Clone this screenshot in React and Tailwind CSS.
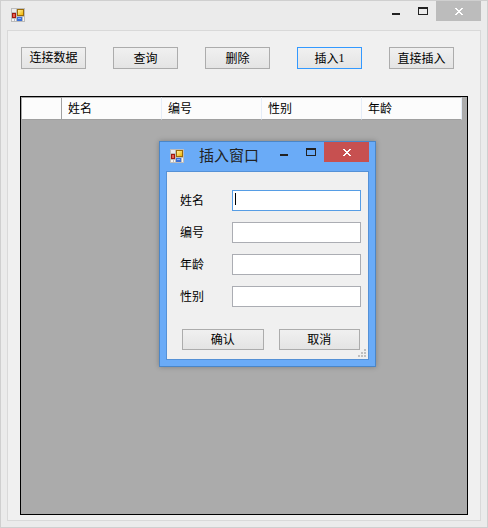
import React from "react";

function FormIcon() {
  return (
    <svg width="14" height="14" viewBox="0 0 14 14" shapeRendering="crispEdges" aria-hidden="true" className="block">
      <defs>
        <linearGradient id="gold" x1="0" y1="0" x2="1" y2="1">
          <stop offset="0" stopColor="#fff0a0" />
          <stop offset="1" stopColor="#f0b400" />
        </linearGradient>
      </defs>
      <rect width="14" height="14" fill="#bcbcbc" />
      <rect x="1" y="1" width="4" height="3" fill="#ececec" />
      <rect x="1" y="11" width="2" height="2" fill="#f4f4f4" />
      <rect x="4" y="11" width="1" height="2" fill="#f4f4f4" />
      <rect x="12" y="9" width="1" height="4" fill="#f4f4f4" />
      <rect x="6" y="1" width="7" height="7" fill="#9a6a08" />
      <rect x="7" y="2" width="5" height="5" fill="url(#gold)" />
      <rect x="1" y="5" width="4" height="5" fill="#a01810" />
      <rect x="2" y="6" width="2" height="3" fill="#e86050" />
      <rect x="6" y="9" width="5" height="4" fill="#3a6fd8" />
      <rect x="7" y="10" width="3" height="1" fill="#8ab4f8" />
    </svg>
  );
}

function CaptionButtons({ closeClass }) {
  return (
    <div className="ml-auto flex h-5 self-start">
      <button type="button" aria-label="最小化" className="flex w-[26px] justify-center pt-3">
        <svg width="8" height="2" viewBox="0 0 8 2" shapeRendering="crispEdges">
          <rect width="8" height="2" fill="#222" />
        </svg>
      </button>
      <button type="button" aria-label="最大化" className="flex w-[27px] justify-center pt-1.5">
        <svg width="10" height="8" viewBox="0 0 10 8" shapeRendering="crispEdges">
          <path d="M0 0h10v8H0zM1 2v5h8V2z" fill="#222" fillRule="evenodd" />
        </svg>
      </button>
      <button type="button" aria-label="关闭" className={`flex w-[45px] justify-center pt-[7px] ${closeClass}`}>
        <svg width="8" height="7" viewBox="0 0 8 7" shapeRendering="crispEdges">
          <path
            d="M0 0h2v1h1v1h2V1h1V0h2v1H7v1H6v1H5v1h1v1h1v1h1v1H6V6H5V5H3v1H2v1H0V6h1V5h1V4h1V3H2V2H1V1H0z"
            fill="#fff"
          />
        </svg>
      </button>
    </div>
  );
}

function Button({ className, children }) {
  return (
    <button
      type="button"
      className={`flex items-center justify-center border bg-linear-to-b from-[#f0f0f0] to-[#e4e4e4] leading-4 whitespace-nowrap ${className}`}
    >
      {children}
    </button>
  );
}

const columns = ["姓名", "编号", "性别", "年龄"];

const fields = [
  { id: "name", label: "姓名" },
  { id: "number", label: "编号" },
  { id: "age", label: "年龄" },
  { id: "gender", label: "性别" },
];

function InsertDialog() {
  return (
    <section
      role="dialog"
      aria-labelledby="insert-title"
      className="absolute top-[140px] left-[158px] flex w-[217px] flex-col border border-[#4a86c8] bg-[#6aabf7] px-1.5 pb-1.5 shadow-[0_0_5px_rgba(0,0,0,0.25)]"
    >
      <header className="flex h-[29px] items-center pb-px">
        <span className="ml-1">
          <FormIcon />
        </span>
        <h2 id="insert-title" className="ml-[15px] pb-0.5 text-[15px] leading-5 whitespace-nowrap text-[#222]">
          插入窗口
        </h2>
        <CaptionButtons closeClass="bg-[#c75050]" />
      </header>
      <form className="relative flex flex-col border border-[#5591d6] bg-[#f0f0f0] pt-[18px] pr-[7px] pb-[9px] pl-[13px]">
        <div className="flex flex-col gap-[11px]">
          {fields.map((field, i) => (
            <div key={field.id} className="flex items-center">
              <label htmlFor={field.id} className="w-[52px] pb-0.5 leading-4">
                {field.label}
              </label>
              <div
                className={`flex h-[21px] min-w-0 flex-1 items-center border bg-white ${
                  i === 0 ? "border-[#569de5]" : "border-[#abadb3]"
                }`}
              >
                {i === 0 && <span className="mb-1 ml-0.5 h-3 w-px shrink-0 bg-black" />}
                <input id={field.id} type="text" className="h-full w-full min-w-0 px-0.5 outline-none" />
              </div>
            </div>
          ))}
        </div>
        <div className="mt-[22px] mr-px ml-0.5 flex gap-[15px]">
          <Button className="h-[21px] flex-1 border-[#acacac] pb-0.5">确认</Button>
          <Button className="h-[21px] flex-1 border-[#acacac] pb-0.5">取消</Button>
        </div>
        <svg
          width="8"
          height="8"
          viewBox="0 0 8 8"
          shapeRendering="crispEdges"
          aria-hidden="true"
          className="absolute right-0.5 bottom-0.5"
        >
          <path d="M6 0h2v2H6zM3 3h2v2H3zM6 3h2v2H6zM0 6h2v2H0zM3 6h2v2H3zM6 6h2v2H6z" fill="#bfbfbf" />
        </svg>
      </form>
    </section>
  );
}

export default function App() {
  return (
    <div className="relative flex min-h-screen flex-col border border-[#cfcfcf] bg-[#ebebeb] px-1.5 pb-1.5 font-['Noto_Sans_CJK_SC',sans-serif] text-xs text-black">
      <header className="flex h-[29px] items-center pb-px">
        <span className="ml-1">
          <FormIcon />
        </span>
        <CaptionButtons closeClass="bg-[#bcbcbc]" />
      </header>
      <main className="flex flex-1 flex-col border border-[#d9d9d9] bg-[#f0f0f0] pt-4 pr-3 pb-[5px] pl-3">
        <div className="ml-px flex gap-[27px]">
          <Button className="h-[22px] w-[65px] border-[#acacac] pb-0.5">连接数据</Button>
          <Button className="h-[22px] w-[65px] border-[#acacac]">查询</Button>
          <Button className="h-[22px] w-[65px] border-[#acacac]">删除</Button>
          <Button className="h-[22px] w-[65px] border-[#3399ff]">
            插入<span className="font-['Liberation_Serif',serif]">1</span>
          </Button>
          <Button className="h-[22px] w-[65px] border-[#acacac]">直接插入</Button>
        </div>
        <div className="mt-[27px] flex-1 border border-black bg-[#ababab]">
          <table className="ml-px table-fixed border-separate border-spacing-0 bg-[#fcfcfc] text-left">
            <thead>
              <tr className="h-[23px]">
                <th className="w-10 border-t border-r border-b border-[#a0a0a0] p-0" />
                {columns.map((name) => (
                  <th
                    key={name}
                    className="w-[100px] border-t border-r border-b border-t-[#b4b4b4] border-r-[#e5edf8] border-b-[#a0a0a0] pt-0 pr-0 pb-0.5 pl-1.5 leading-4 font-normal"
                  >
                    {name}
                  </th>
                ))}
              </tr>
            </thead>
          </table>
        </div>
      </main>
      <InsertDialog />
    </div>
  );
}
